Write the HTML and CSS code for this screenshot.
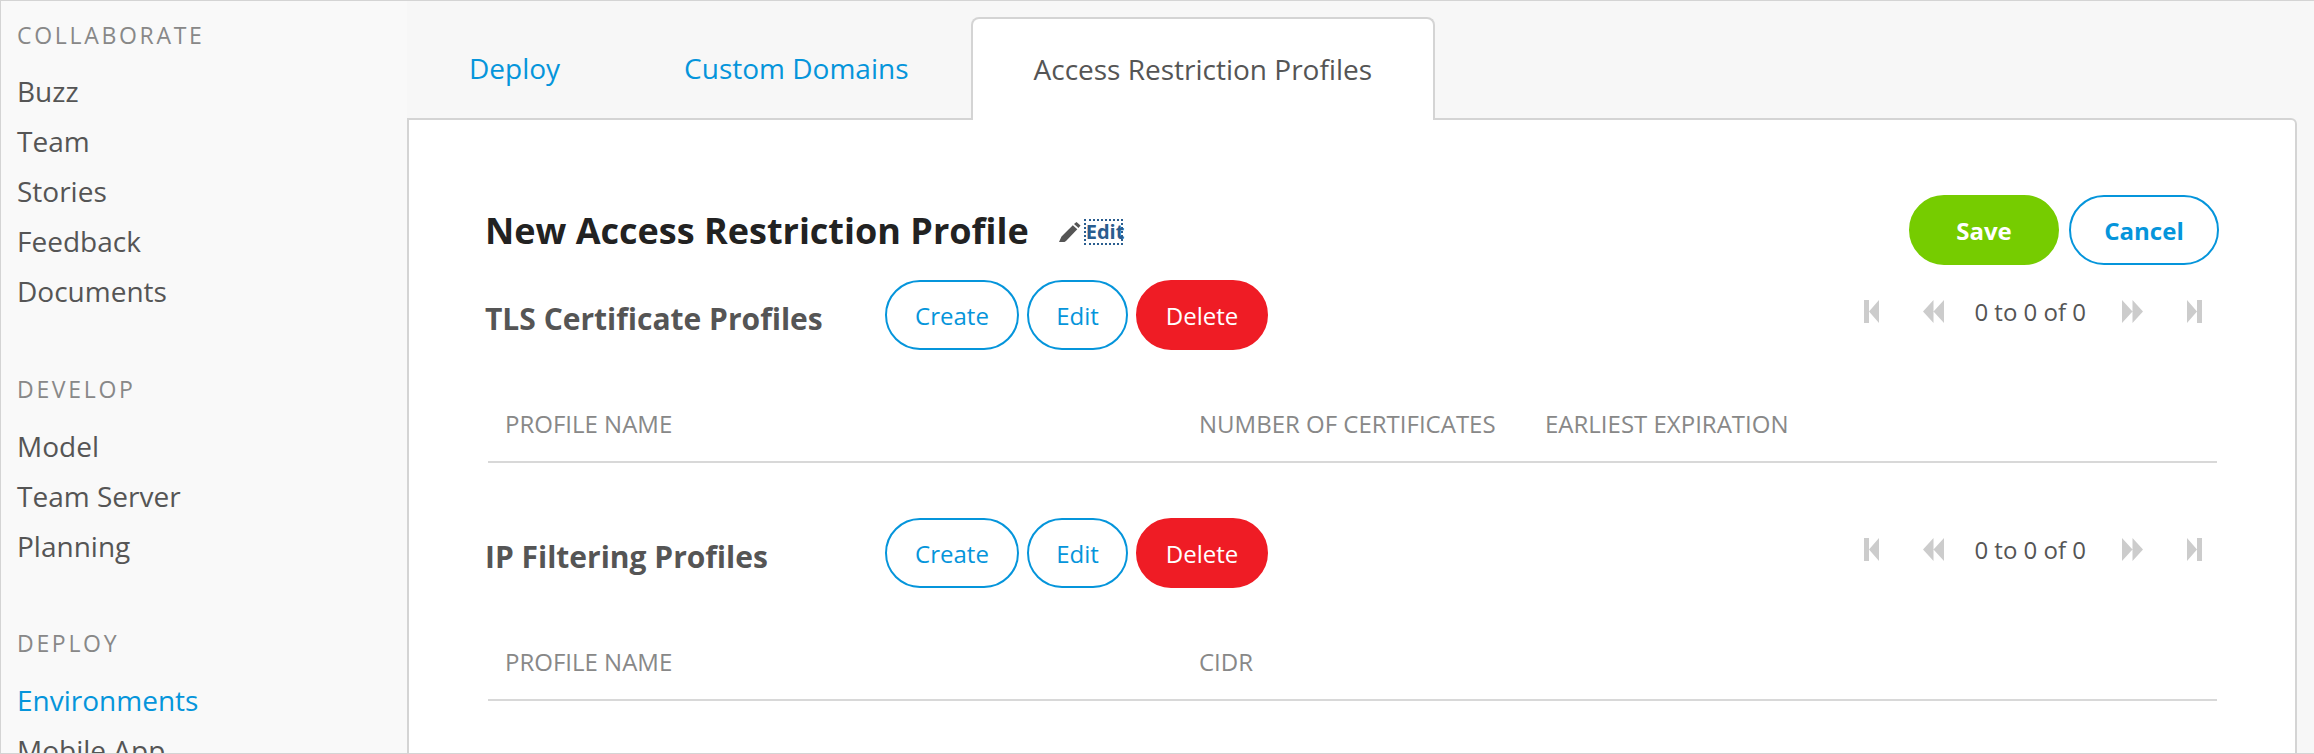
FILE: index.html
```html
<!DOCTYPE html>
<html lang="en">
<head>
    <meta charset="UTF-8">
    <title>Access Restriction Profiles</title>
    <link rel="stylesheet" href="styles.css">
</head>
<body>
    <div class="app">
        <aside class="sidebar">
            <div class="nav-group">
                <h4>COLLABORATE</h4>
                <a>Buzz</a>
                <a>Team</a>
                <a>Stories</a>
                <a>Feedback</a>
                <a>Documents</a>
            </div>
            <div class="nav-group">
                <h4>DEVELOP</h4>
                <a>Model</a>
                <a>Team Server</a>
                <a>Planning</a>
            </div>
            <div class="nav-group">
                <h4>DEPLOY</h4>
                <a class="active">Environments</a>
                <a>Mobile App</a>
            </div>
        </aside>

        <main class="content">
            <div class="tabs">
                <a class="tab">Deploy</a>
                <a class="tab">Custom Domains</a>
                <a class="tab tab-active">Access Restriction Profiles</a>
            </div>
            <div class="panel">
                <div class="title-row">
                    <h1>New Access Restriction Profile</h1>
                    <svg class="pencil" viewBox="0 0 22 20"><path d="M17.500 0 21.500 3.500 19.500 6 15 2ZM13.800 3.200 18.300 7.200 7 19 5.500 20H0L2.500 14.500Z" fill="#555"/></svg>
                    <a class="edit-link">Edit</a>
                    <div class="title-actions">
                        <button class="btn btn-save">Save</button>
                        <button class="btn btn-cancel">Cancel</button>
                    </div>
                </div>

                <section class="profiles">
                    <div class="profiles-head">
                        <h2>TLS Certificate Profiles</h2>
                        <button class="btn btn-create">Create</button>
                        <button class="btn btn-edit">Edit</button>
                        <button class="btn btn-delete">Delete</button>
                        <div class="pager">
                            <svg class="pg-first" viewBox="0 0 15 23"><path d="M0 0H5V23H0ZM5 11.500 15 0V23Z"/></svg>
                            <svg class="pg-prev" viewBox="0 0 21 23"><path d="M0 11.500 10.500 0V23ZM10.500 11.500 21 0V23Z"/></svg>
                            <span>0 to 0 of 0</span>
                            <svg class="pg-next" viewBox="0 0 21 23"><path d="M0 0 10.500 11.500 0 23ZM10.500 0 21 11.500 10.500 23Z"/></svg>
                            <svg class="pg-last" viewBox="0 0 15 23"><path d="M0 0 10 11.500 0 23ZM10 0H15V23H10Z"/></svg>
                        </div>
                    </div>
                    <div class="grid-head">
                        <span class="col-name">PROFILE NAME</span>
                        <span class="col-count">NUMBER OF CERTIFICATES</span>
                        <span>EARLIEST EXPIRATION</span>
                    </div>
                </section>

                <section class="profiles">
                    <div class="profiles-head">
                        <h2>IP Filtering Profiles</h2>
                        <button class="btn btn-create">Create</button>
                        <button class="btn btn-edit">Edit</button>
                        <button class="btn btn-delete">Delete</button>
                        <div class="pager">
                            <svg class="pg-first" viewBox="0 0 15 23"><path d="M0 0H5V23H0ZM5 11.500 15 0V23Z"/></svg>
                            <svg class="pg-prev" viewBox="0 0 21 23"><path d="M0 11.500 10.500 0V23ZM10.500 11.500 21 0V23Z"/></svg>
                            <span>0 to 0 of 0</span>
                            <svg class="pg-next" viewBox="0 0 21 23"><path d="M0 0 10.500 11.500 0 23ZM10.500 0 21 11.500 10.500 23Z"/></svg>
                            <svg class="pg-last" viewBox="0 0 15 23"><path d="M0 0 10 11.500 0 23ZM10 0H15V23H10Z"/></svg>
                        </div>
                    </div>
                    <div class="grid-head">
                        <span class="col-name">PROFILE NAME</span>
                        <span>CIDR</span>
                    </div>
                </section>
            </div>
        </main>
    </div>
</body>
</html>
```

FILE: styles.css
```css
html, body {
    margin: 0;
    height: 100%;
    overflow: hidden;
}
body {
    font-family: "Open Sans", sans-serif;
    color: #555;
    background-color: #f8f8f8;
}
.app {
    display: flex;
    box-sizing: border-box;
    height: 754px;
    overflow: hidden;
    border: 1px solid #d4d4d4;
    border-width: 1px 0 1px 1px;
}

/* sidebar */
.sidebar {
    width: 406px;
    flex: none;
    box-sizing: border-box;
    padding: 17px 0 0 16px;
    background-color: #f9f9f9;
}
.nav-group {
    margin-bottom: 56px;
}
.nav-group + .nav-group {
    margin-bottom: 55px;
}
.nav-group h4 {
    margin: 0 0 14px;
    font-size: 23px;
    line-height: 34px;
    font-weight: 400;
    letter-spacing: 2.7px;
    color: #888;
}
.nav-group + .nav-group h4 {
    margin-bottom: 15px;
}
.nav-group a {
    display: block;
    font-size: 28px;
    line-height: 50px;
    color: #555;
}
.nav-group a.active {
    color: #0595db;
}

/* tabs */
.content {
    flex: 1;
    min-width: 0;
    padding-right: 17px;
    background-color: #f7f7f7;
}
.tabs {
    display: flex;
    height: 101px;
    margin-top: 16px;
    position: relative;
    z-index: 1;
}
.tab {
    box-sizing: border-box;
    height: 103px;
    padding: 32px 0 0;
    font-size: 28px;
    line-height: 38px;
    color: #0595db;
}
.tab:nth-child(1) {
    margin-left: 62px;
}
.tab:nth-child(2) {
    margin-left: 124px;
}
.tab-active {
    margin-left: 62px;
    padding: 31px 61px 0 61px;
    background-color: #fff;
    color: #555;
    border: 2px solid #d4d4d4;
    border-bottom: 0;
    border-radius: 8px 8px 0 0;
}
.panel {
    height: 700px;
    box-sizing: border-box;
    padding: 75px 76px 0 76px;
    background-color: #fff;
    border: 2px solid #d4d4d4;
    border-radius: 0 6px 0 0;
}

/* title */
.title-row {
    display: flex;
    align-items: center;
    height: 70px;
}
.title-row h1 {
    margin: 0;
    font-size: 36px;
    font-weight: 700;
    color: #222;
}
.pencil {
    width: 22px;
    height: 20px;
    margin: 4px 0 0 30px;
}
.edit-link {
    width: 35px;
    margin: 4px 0 0 5px;
    font-size: 20px;
    line-height: 22px;
    font-weight: 700;
    white-space: nowrap;
    color: #2a5d8f;
    outline: 2px dotted #2a5d8f;
}
.title-actions {
    display: flex;
    gap: 10px;
    margin-left: auto;
}

/* buttons */
.btn {
    height: 70px;
    box-sizing: border-box;
    padding: 0;
    border: 2px solid #0595db;
    border-radius: 35px;
    background-color: #fff;
    color: #0595db;
    font-family: inherit;
    font-size: 24px;
}
.btn-save {
    width: 150px;
    border-color: #76cc00;
    background-color: #76cc00;
    color: #fff;
    font-weight: 700;
}
.btn-cancel {
    width: 150px;
    font-weight: 700;
}
.btn-create {
    width: 134px;
}
.btn-edit {
    width: 101px;
    margin-left: 8px;
}
.btn-delete {
    width: 132px;
    margin-left: 8px;
    border-color: #ef1c25;
    background-color: #ef1c25;
    color: #fff;
}

/* profile sections */
.profiles {
    padding-top: 15px;
}
.profiles + .profiles {
    padding-top: 55px;
}
.profiles-head {
    display: flex;
    align-items: center;
    height: 70px;
}
.profiles-head h2 {
    width: 400px;
    margin: 6px 0 0;
    font-size: 30px;
    font-weight: 700;
    color: #555;
}
.pager {
    display: flex;
    align-items: center;
    margin: -8px 0 0 auto;
    padding-right: 17px;
    font-size: 24px;
}
.pager svg {
    height: 23px;
    fill: #ccc;
}
.pg-first, .pg-last {
    width: 15px;
}
.pg-prev, .pg-next {
    width: 21px;
}
.pg-prev {
    margin: 0 30px 0 44px;
}
.pg-next {
    margin: 0 44px 0 36px;
}
.grid-head {
    display: flex;
    align-items: center;
    height: 75px;
    margin: 0 2px 0 3px;
    padding: 36px 0 0 17px;
    border-bottom: 2px solid #d8d8d8;
    font-size: 24px;
    color: #888;
}
.col-name {
    width: 694px;
}
.col-count {
    width: 346px;
}
```
